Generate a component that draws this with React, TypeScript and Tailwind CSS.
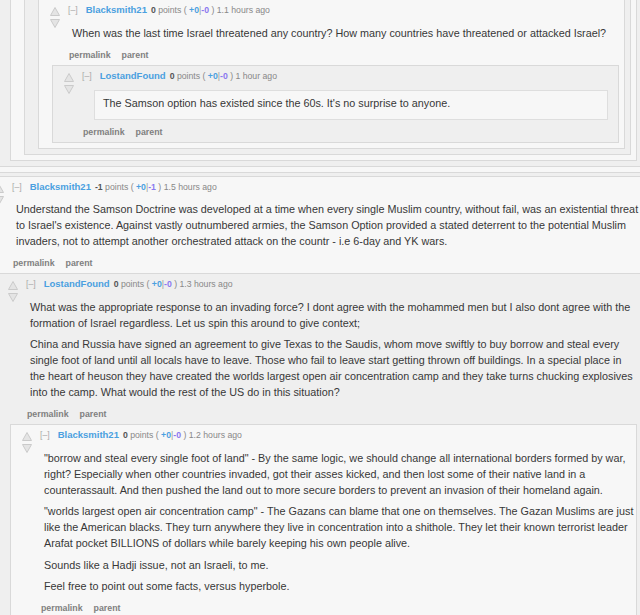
import { ReactNode } from "react";

type CommentProps = {
  level: number;
  author: string;
  points: string;
  up: string;
  down: string;
  age: string;
  paras?: string[];
  quote?: string;
  narrow?: boolean;
  children?: ReactNode;
};

function Arrow({ down }: { down?: boolean }) {
  return (
    <svg width="10" height="9" viewBox="0 0 10 9" className="block">
      <polygon
        points={down ? "0.5,0.5 9.5,0.5 5,8.5" : "5,0.5 9.5,8.5 0.5,8.5"}
        fill="#e4e4e4"
        stroke="#cacaca"
        strokeWidth="1"
      />
    </svg>
  );
}

function Box({ level, className = "", children }: { level: number; className?: string; children: ReactNode }) {
  const bg = level % 2 === 0 ? "bg-[#f7f7f7]" : "bg-[#efefef]";
  return <div className={`border border-[#d9d9d9] ${bg} ${className}`}>{children}</div>;
}

function Child({ children }: { children: ReactNode }) {
  return <div className="ml-[13px] mr-[5px] mb-[5px]">{children}</div>;
}

function Comment({ level, author, points, up, down, age, paras, quote, narrow, children }: CommentProps) {
  return (
    <Box level={level}>
      <div className="flex">
        <div className="ml-[11px] mt-[7px] flex w-[10px] shrink-0 flex-col gap-[3px]">
          <Arrow />
          <Arrow down />
        </div>
        <div className="ml-[8px] min-w-0 flex-1 pt-[4px] pr-[2px] pb-[4px]">
          <div className="whitespace-nowrap text-[8.7px] leading-[12px] text-[#888]">
            <span className="text-[#aaa]">[–]</span>
            <span className="ml-[8px] text-[9.5px] font-bold text-[#4aa0e0]">{author}</span>
            <span className="ml-[4px] font-bold text-[#555]">{points}</span> points ({" "}
            <span className="font-bold text-[#4aa0e0]">{up}</span>
            <span className="text-[#999]">|</span>
            <span className="font-bold text-[#8a78f0]">{down}</span> ) {age}
          </div>
          {quote ? (
            <div className="mt-[8px] ml-[12px] mr-[8px] border border-[#dedede] bg-[#f7f7f7] pt-[4px] pb-[8px] pl-[8px] text-[10.8px] leading-[16px] text-[#383838]">
              {quote}
            </div>
          ) : (
            <div
              className={`mt-[8.5px] flex flex-col gap-[5.5px] pl-[4px] ${narrow ? "pr-[5px]" : ""} text-[10.8px] leading-[16px] text-[#383838]`}
            >
              {paras?.map((p, i) => (
                <p key={i}>{p}</p>
              ))}
            </div>
          )}
          <div
            className={`${quote ? "mt-[6px]" : "mt-[8px]"} flex gap-[11px] pl-[1px] text-[8.8px] font-bold leading-[12px] text-[#808080]`}
          >
            <span>permalink</span>
            <span>parent</span>
          </div>
        </div>
      </div>
      {children && <Child>{children}</Child>}
    </Box>
  );
}

export default function App() {
  return (
    <div className="h-[615px] w-[640px] overflow-hidden bg-[#efefef] font-['Liberation_Sans',Arial,sans-serif]">
      <div className="-mt-[29px] -ml-[18px] w-[667px]">
        {/* previous thread, only its bottom shows */}
        <Box level={0} className="pt-[6px]">
          <Child>
            <Box level={1} className="pt-[6px]">
              <Child>
                <Box level={2} className="pt-[6px]">
                  <Child>
                    <Box level={3} className="pt-[6px]">
                      <Child>
                        <Comment
                          level={4}
                          author="Blacksmith21"
                          points="0"
                          up="+0"
                          down="-0"
                          age="1.1 hours ago"
                          paras={[
                            "When was the last time Israel threatened any country? How many countries have threatened or attacked Israel?",
                          ]}
                        >
                          <Comment
                            level={5}
                            author="LostandFound"
                            points="0"
                            up="+0"
                            down="-0"
                            age="1 hour ago"
                            quote="The Samson option has existed since the 60s. It's no surprise to anyone."
                          />
                        </Comment>
                      </Child>
                    </Box>
                  </Child>
                </Box>
              </Child>
            </Box>
          </Child>
        </Box>

        <div className="mt-[3px]">
          <Comment
            level={0}
            author="Blacksmith21"
            points="-1"
            up="+0"
            down="-1"
            age="1.5 hours ago"
            paras={[
              "Understand the Samson Doctrine was developed at a time when every single Muslim country, without fail, was an existential threat to Israel's existence. Against vastly outnumbered armies, the Samson Option provided a stated deterrent to the potential Muslim invaders, not to attempt another orchestrated attack on the countr - i.e 6-day and YK wars.",
            ]}
          >
            <Comment
              level={1}
              author="LostandFound"
              points="0"
              up="+0"
              down="-0"
              age="1.3 hours ago"
              narrow
              paras={[
                "What was the appropriate response to an invading force? I dont agree with the mohammed men but I also dont agree with the formation of Israel regardless. Let us spin this around to give context;",
                "China and Russia have signed an agreement to give Texas to the Saudis, whom move swiftly to buy borrow and steal every single foot of land until all locals have to leave. Those who fail to leave start getting thrown off buildings. In a special place in the heart of heuson they have created the worlds largest open air concentration camp and they take turns chucking explosives into the camp. What would the rest of the US do in this situation?",
              ]}
            >
              <Comment
                level={2}
                author="Blacksmith21"
                points="0"
                up="+0"
                down="-0"
                age="1.2 hours ago"
                paras={[
                  "\"borrow and steal every single foot of land\" - By the same logic, we should change all international borders formed by war, right? Especially when other countries invaded, got their asses kicked, and then lost some of their native land in a counterassault. And then pushed the land out to more secure borders to prevent an invasion of their homeland again.",
                  "\"worlds largest open air concentration camp\" - The Gazans can blame that one on themselves. The Gazan Muslims are just like the American blacks. They turn anywhere they live in concentration into a shithole. They let their known terrorist leader Arafat pocket BILLIONS of dollars while barely keeping his own people alive.",
                  "Sounds like a Hadji issue, not an Israeli, to me.",
                  "Feel free to point out some facts, versus hyperbole.",
                ]}
              />
            </Comment>
          </Comment>
        </div>
      </div>
    </div>
  );
}
